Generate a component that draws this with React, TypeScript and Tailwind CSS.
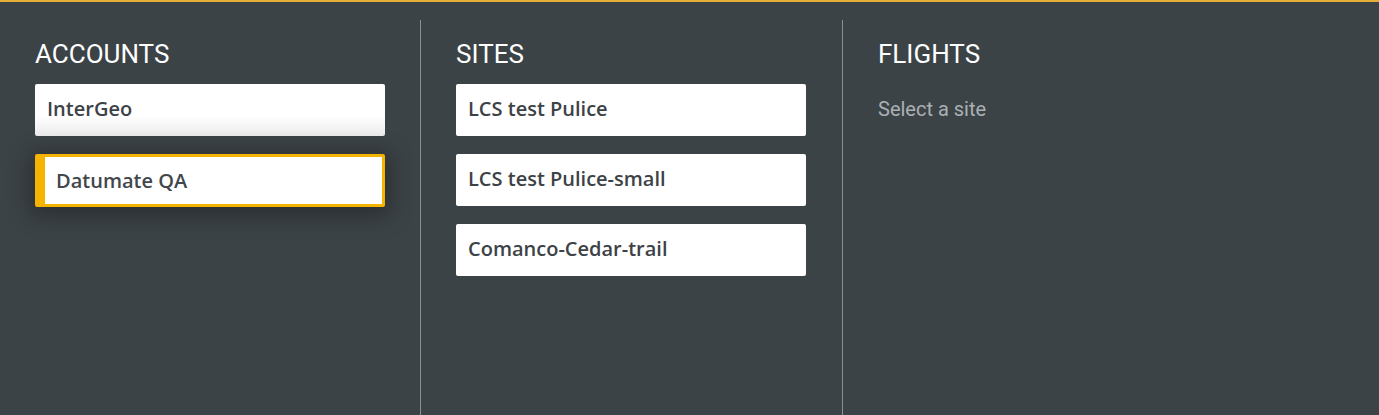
import React from "react";

const Card = ({ label, selected, hovered }: { label: string; selected?: boolean; hovered?: boolean }) => {
  if (selected) {
    return (
      <div className="h-[53px] rounded-[2px] border-[3px] border-l-[10px] border-[#f5b400] bg-white flex items-center pl-[11px] shadow-[0_4px_22px_6px_rgba(0,0,0,0.3)]">
        <span className="text-[20px] font-[550] text-[#41474b]" style={{ fontFamily: '"Open Sans", sans-serif' }}>{label}</span>
      </div>
    );
  }
  return (
    <div
      className={
        "h-[52px] rounded-[2px] flex items-center pl-[12px] " +
        (hovered ? "bg-gradient-to-b from-white from-60% to-[#ececec]" : "bg-white")
      }
    >
      <span className="text-[20px] font-[550] text-[#3d4247] -mt-[2px]" style={{ fontFamily: '"Open Sans", sans-serif' }}>{label}</span>
    </div>
  );
};

const Heading = ({ children }: { children: React.ReactNode }) => (
  <h2 className="text-[26px] leading-[30px] text-white h-[30px] mb-[15px] mt-[19px]" style={{ fontFamily: "Roboto, sans-serif" }}>
    {children}
  </h2>
);

export default function App() {
  return (
    <div className="w-[1379px] h-[415px] bg-[#3c4347] border-t-2 border-[#e8ae3a] overflow-hidden flex">
      <div className="w-[420px] pt-[18px] pl-[35px] pr-[35px] flex flex-col">
        <Heading>ACCOUNTS</Heading>
        <div className="flex flex-col gap-[18px]">
          <Card label="InterGeo" hovered />
          <Card label="Datumate QA" selected />
        </div>
      </div>
      <div className="w-[422px] mt-[18px] border-l border-[#8b9094] pl-[35px] pr-[36px] flex flex-col">
        <Heading>SITES</Heading>
        <div className="flex flex-col gap-[18px]">
          <Card label="LCS test Pulice" />
          <Card label="LCS test Pulice-small" />
          <Card label="Comanco-Cedar-trail" />
        </div>
      </div>
      <div className="flex-1 mt-[18px] border-l border-[#8b9094] pl-[35px] flex flex-col">
        <Heading>FLIGHTS</Heading>
        <p className="text-[20px] leading-[28px] text-[#aab0b3] mt-[11px]" style={{ fontFamily: "Roboto, sans-serif" }}>Select a site</p>
      </div>
    </div>
  );
}
